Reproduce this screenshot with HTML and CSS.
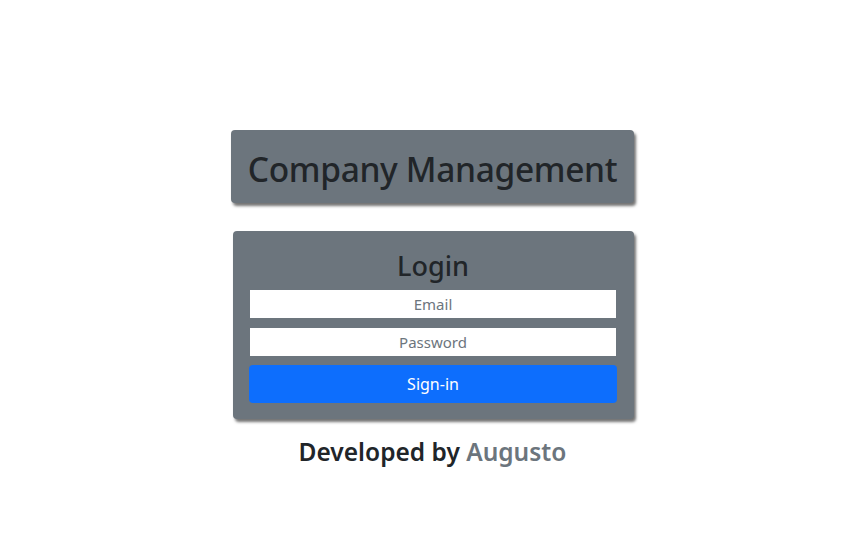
FILE: index.html
```html
<!DOCTYPE html>
<html>
<head>
<meta charset="utf-8">
<link rel="stylesheet" href="styles.css">
</head>
<body>
<main class="page">
  <div class="title-box"><h1 class="title">Company Management</h1></div>
  <form class="login-card">
    <h2 class="login-title">Login</h2>
    <input class="field" type="text" placeholder="Email">
    <input class="field" type="password" placeholder="Password">
    <button class="btn" type="button">Sign-in</button>
  </form>
  <p class="credit">Developed by <span class="author">Augusto</span></p>
</main>
</body>
</html>
```
FILE: styles.css
```css
* { box-sizing: border-box; }
html, body { margin: 0; padding: 0; background: #fff; }
body { font-family: "Noto Sans", "Open Sans", sans-serif; color: #212529; }
.page {
  display: flex;
  flex-direction: column;
  align-items: center;
  padding-top: 130px;
  padding-left: 1px;
}
.title-box {
  width: 403px;
  height: 73px;
  background: #6c757d;
  border-radius: 4px;
  box-shadow: 2px 3px 3px rgba(0,0,0,0.55);
  display: flex;
  align-items: center;
  justify-content: center;
  padding-top: 5px;
}
.title {
  margin: 0;
  font-size: 33.5px;
  font-weight: 500;
  color: #212529;
  letter-spacing: -0.35px;
}
.login-card {
  margin-top: 28px;
  margin-left: 2px;
  width: 401px;
  height: 188px;
  background: #6c757d;
  border-radius: 4px;
  box-shadow: 2px 3px 3px rgba(0,0,0,0.55);
  padding: 16px 0 0 17px;
  display: flex;
  flex-direction: column;
  align-items: flex-start;
}
.login-title {
  margin: 0;
  width: 366px;
  text-align: center;
  height: 43px;
  line-height: 38px;
  font-size: 27px;
  font-weight: 500;
}
.field {
  width: 366px;
  height: 28px;
  border: none;
  margin: 0 0 10px 0;
  padding: 0;
  text-align: center;
  font-family: inherit;
  font-size: 15px;
  background: #fff;
}
.field::placeholder { color: #6c757d; }
.btn {
  width: 368px;
  height: 38px;
  margin-top: -1px;
  margin-left: -1px;
  border: none;
  border-radius: 4px;
  background: #0d6efd;
  color: #fff;
  font-family: inherit;
  font-size: 16px;
}
.credit {
  margin: 16px 0 0 0;
  font-size: 24.5px;
  font-weight: 600;
  color: #212529;
}
.author { color: #6c757d; }
```
